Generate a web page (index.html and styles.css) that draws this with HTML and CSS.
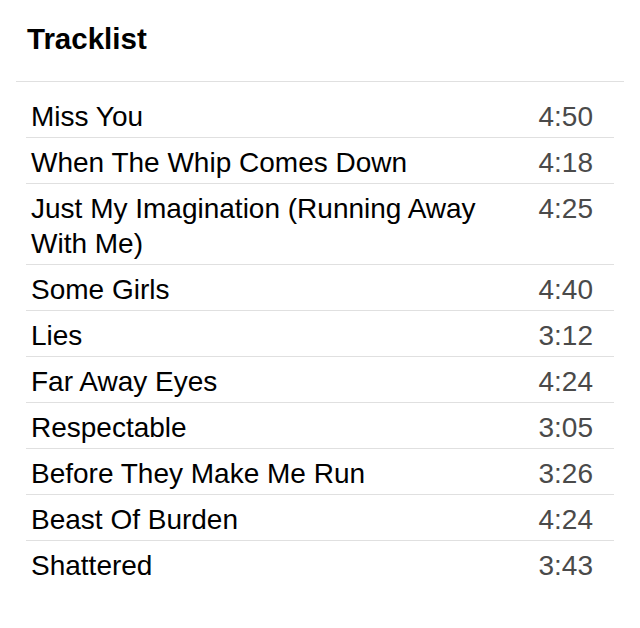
FILE: index.html
```html
<!DOCTYPE html>
<html>
<head>
<meta charset="utf-8">
<link rel="stylesheet" href="styles.css">
</head>
<body>
<div class="panel">
  <h1 class="title">Tracklist</h1>
  <ul class="tracks">
    <li class="track"><span class="name">Miss You</span><span class="time">4:50</span></li>
    <li class="track"><span class="name">When The Whip Comes Down</span><span class="time">4:18</span></li>
    <li class="track"><span class="name">Just My Imagination (Running Away With Me)</span><span class="time">4:25</span></li>
    <li class="track"><span class="name">Some Girls</span><span class="time">4:40</span></li>
    <li class="track"><span class="name">Lies</span><span class="time">3:12</span></li>
    <li class="track"><span class="name">Far Away Eyes</span><span class="time">4:24</span></li>
    <li class="track"><span class="name">Respectable</span><span class="time">3:05</span></li>
    <li class="track"><span class="name">Before They Make Me Run</span><span class="time">3:26</span></li>
    <li class="track"><span class="name">Beast Of Burden</span><span class="time">4:24</span></li>
    <li class="track"><span class="name">Shattered</span><span class="time">3:43</span></li>
  </ul>
</div>
</body>
</html>
```
FILE: styles.css
```css
html, body {
  margin: 0;
  padding: 0;
  background: #ffffff;
}
body {
  font-family: "Liberation Sans", Arial, Helvetica, sans-serif;
  color: #000;
}
.panel {
  margin: 0 16px;
}
.title {
  margin: 0;
  padding: 22px 11px 25px;
  font-size: 29.5px;
  line-height: 34px;
  font-weight: bold;
  border-bottom: 1px solid #e0e0e0;
}
.tracks {
  list-style: none;
  margin: 10px 10px 0;
  padding: 0;
}
.track {
  display: flex;
  justify-content: space-between;
  align-items: flex-start;
  gap: 30px;
  padding: 7px 21px 3px 5px;
  font-size: 28px;
  line-height: 35px;
  border-bottom: 1px solid #e0e0e0;
}
.track:last-child {
  border-bottom: none;
}
.name {
  flex: 1;
}
.time {
  color: #4a4a4a;
  white-space: nowrap;
}
```
